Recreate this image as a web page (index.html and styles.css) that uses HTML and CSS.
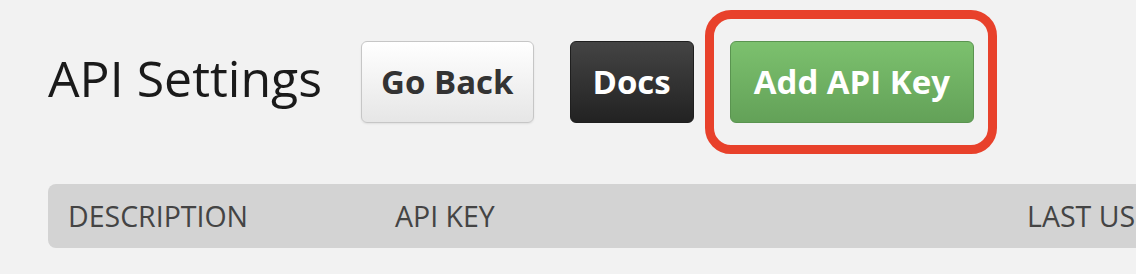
FILE: index.html
```html
<!DOCTYPE html>
<html lang="en">
<head>
    <meta charset="UTF-8">
    <meta name="viewport" content="width=device-width, initial-scale=1.0">
    <title>API Settings</title>
    <link rel="stylesheet" href="styles.css">
</head>
<body>
<div class="page">
    <div class="top">
        <h1>API Settings</h1>
        <div class="actions">
            <button class="btn btn-light">Go Back</button>
            <button class="btn btn-dark">Docs</button>
            <span class="highlight">
                <button class="btn btn-green">Add API Key</button>
            </span>
        </div>
    </div>
    <div class="table-head">
        <div class="col">DESCRIPTION</div>
        <div class="col">API KEY</div>
        <div class="col">LAST USED</div>
    </div>
</div>
</body>
</html>
```

FILE: styles.css
```css
body {
    margin: 0;
    background-color: #f2f2f2;
    font-family: "Open Sans", "DejaVu Sans", sans-serif;
    overflow: hidden;
}
.page {
    padding: 41px 0 0 48px;
}
.top {
    display: flex;
    align-items: center;
}
h1 {
    margin: -8px 39px 0 0;
    font-size: 50px;
    font-weight: 400;
    color: #1a1a1a;
    line-height: 82px;
}
.actions {
    display: flex;
    gap: 36px;
}
.btn {
    height: 82px;
    padding: 0 21px;
    border-radius: 6px;
    font-family: "Open Sans", "DejaVu Sans", sans-serif;
    font-size: 33px;
    font-weight: 700;
    line-height: 80px;
    cursor: pointer;
}
.btn-light {
    padding: 0 19px;
    color: #333;
    border: 1px solid #c6c6c6;
    background: linear-gradient(#ffffff, #e6e6e6);
    box-shadow: 0 1px 2px rgba(0, 0, 0, 0.08);
}
.btn-dark {
    padding: 0 22px;
    color: #fff;
    border: 1px solid #1f1f1f;
    background: linear-gradient(#444444, #222222);
}
.btn-green {
    padding: 0 23px;
    color: #fff;
    border: 1px solid #5a9450;
    background: linear-gradient(#7cc16e, #63a158);
}
.highlight {
    position: relative;
    display: flex;
}
.highlight::after {
    content: "";
    position: absolute;
    top: -31px;
    bottom: -31px;
    left: -25px;
    right: -23px;
    border: 9px solid #e8412b;
    border-radius: 26px;
    pointer-events: none;
}
.table-head {
    display: grid;
    grid-template-columns: 327px 632px 300px;
    align-items: center;
    width: 1200px;
    height: 64px;
    margin-top: 61px;
    padding-left: 20px;
    background-color: #d3d3d3;
    border-radius: 8px;
    font-size: 28.5px;
    color: #444;
}
.col {
    white-space: nowrap;
}
```
